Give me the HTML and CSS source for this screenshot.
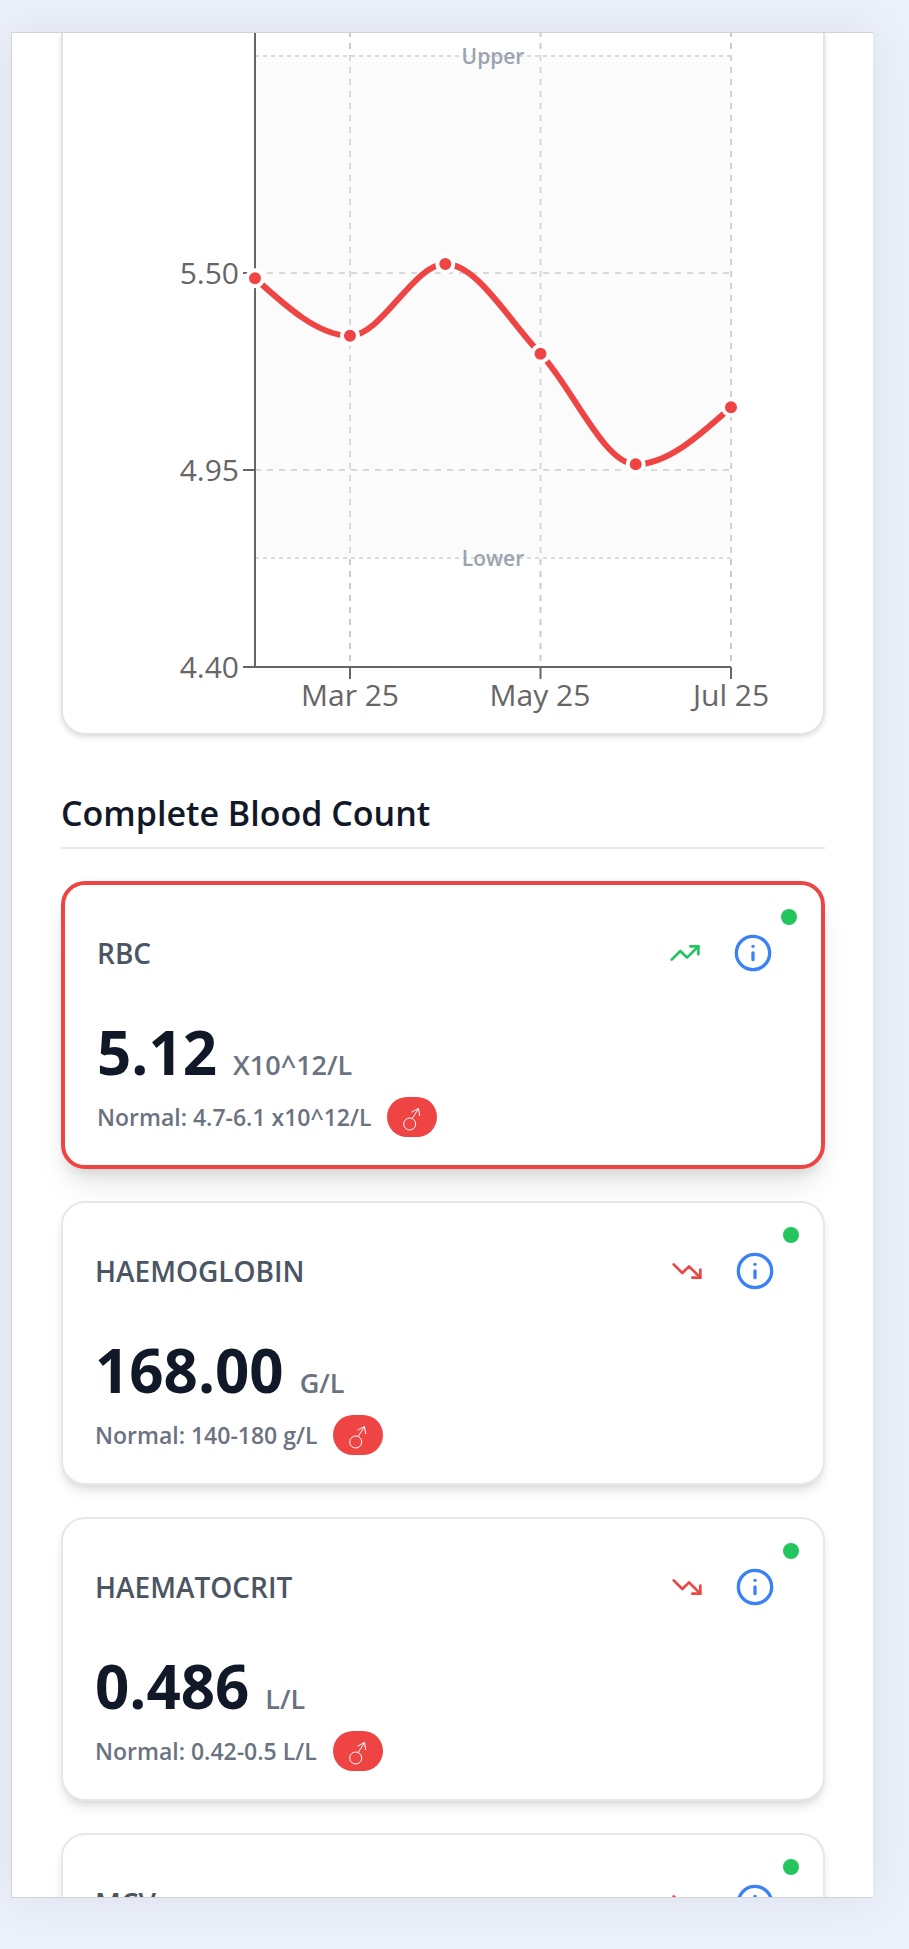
FILE: index.html
```
<!DOCTYPE html>
<html lang="en">
<head>
<meta charset="utf-8">
<meta name="viewport" content="width=device-width, initial-scale=1">
<title>Blood results</title>
<link rel="stylesheet" href="styles.css">
</head>
<body class="page">
<svg width="0" height="0" class="sprite" aria-hidden="true">
  <symbol id="info" viewBox="0 0 24 24"><circle cx="12" cy="12" r="10"/><path d="M12 16v-4"/><path d="M12 8h.01"/></symbol>
  <symbol id="up" viewBox="0 0 24 24"><polyline points="22 7 13.5 15.5 8.5 10.5 2 17"/><polyline points="16 7 22 7 22 13"/></symbol>
  <symbol id="down" viewBox="0 0 24 24"><polyline points="22 17 13.5 8.5 8.5 13.5 2 7"/><polyline points="16 17 22 17 22 11"/></symbol>
  <symbol id="male" viewBox="0 0 50 40"><circle cx="22.7" cy="27" r="6"/><path d="M25.3 21.4 31.5 11.5M24.5 15.2 31.5 11.5 32.7 19"/></symbol>
</svg>
<main class="panel">
  <section class="chart-card">
    <svg class="chart" viewBox="63 33 760 700" role="img" aria-label="RBC trend">
      <g class="grid">
        <path d="M255 273H731M255 470H731"/>
        <path d="M350 31V667M540.5 31V667M731 31V667"/>
      </g>
      <rect class="band" x="255" y="56" width="476" height="502"/>
      <path class="limit" d="M255 56H731M255 558H731"/>
      <path class="axis" d="M255 33V667M243 667H731M243 273H255M243 470H255M350 667V679M540.5 667V679M731 667V679"/>
      <g class="tick tick-y">
        <text x="239" y="284">5.50</text>
        <text x="239" y="481">4.95</text>
        <text x="239" y="678">4.40</text>
      </g>
      <g class="tick tick-x">
        <text x="350" y="706">Mar 25</text>
        <text x="540" y="706">May 25</text>
        <text x="731" y="706">Jul 25</text>
      </g>
      <g class="limit-label">
        <text x="493" y="64">Upper</text>
        <text x="493" y="566">Lower</text>
      </g>
      <path class="line" d="M255 278.3C286.7 307 318.3 335.7 350 335.7C381.8 335.7 413.5 264 445.3 264C477 264 508.7 320.3 540.5 353.7C572.2 387.1 604 464.3 635.7 464.3C667.4 464.3 699.3 435.8 731 407.3"/>
      <g class="point">
        <circle cx="255" cy="278.3" r="8"/><circle cx="350" cy="335.7" r="8"/><circle cx="445.3" cy="264" r="8"/>
        <circle cx="540.5" cy="353.7" r="8"/><circle cx="635.7" cy="464.3" r="8"/><circle cx="731" cy="407.3" r="8"/>
      </g>
    </svg>
  </section>

  <h2 class="heading">Complete Blood Count</h2>

  <div class="cards">
    <article class="card card-active">
      <span class="status"></span>
      <header class="card-head">
        <h3 class="name">RBC</h3>
        <svg class="trend trend-up"><use href="#up"/></svg>
        <button class="info" type="button" aria-label="About RBC"><svg class="info-icon"><use href="#info"/></svg></button>
      </header>
      <p class="reading"><span class="value">5.12</span><span class="unit">X10^12/L</span></p>
      <p class="normal">Normal: 4.7-6.1 x10^12/L<span class="sex"><svg class="sex-icon" role="img" aria-label="Male"><use href="#male"/></svg></span></p>
    </article>
    <article class="card">
      <span class="status"></span>
      <header class="card-head">
        <h3 class="name">HAEMOGLOBIN</h3>
        <svg class="trend trend-down"><use href="#down"/></svg>
        <button class="info" type="button" aria-label="About haemoglobin"><svg class="info-icon"><use href="#info"/></svg></button>
      </header>
      <p class="reading"><span class="value">168.00</span><span class="unit">G/L</span></p>
      <p class="normal">Normal: 140-180 g/L<span class="sex"><svg class="sex-icon" role="img" aria-label="Male"><use href="#male"/></svg></span></p>
    </article>
    <article class="card">
      <span class="status"></span>
      <header class="card-head">
        <h3 class="name">HAEMATOCRIT</h3>
        <svg class="trend trend-down"><use href="#down"/></svg>
        <button class="info" type="button" aria-label="About haematocrit"><svg class="info-icon"><use href="#info"/></svg></button>
      </header>
      <p class="reading"><span class="value">0.486</span><span class="unit">L/L</span></p>
      <p class="normal">Normal: 0.42-0.5 L/L<span class="sex"><svg class="sex-icon" role="img" aria-label="Male"><use href="#male"/></svg></span></p>
    </article>
    <article class="card">
      <span class="status"></span>
      <header class="card-head">
        <h3 class="name">MCV</h3>
        <svg class="trend trend-down"><use href="#down"/></svg>
        <button class="info" type="button" aria-label="About MCV"><svg class="info-icon"><use href="#info"/></svg></button>
      </header>
    </article>
  </div>
</main>
</body>
</html>
```
FILE: styles.css
```
* { box-sizing: border-box; }
.page {
  margin: 0;
  height: 100vh;
  padding: 32px 36px 51px 11px;
  display: flex;
  background: #ecf0fa;
  font-family: "Open Sans", "Noto Sans", sans-serif;
  color: #111827;
  overflow: hidden;
}
.sprite { position: absolute; }
.panel {
  flex: 1;
  min-width: 0;
  padding: 0 48px 0 49px;
  overflow: hidden;
  background: #fff;
  border: 1px solid #d1d3d6;
  border-right: 0;
  box-shadow: 0 0 50px rgba(0, 20, 20, 0.07);
}
.chart-card {
  border: 2px solid #e3e3e3;
  border-top: 0;
  border-radius: 0 0 24px 24px;
  box-shadow: 0 2px 6px rgba(0, 0, 0, 0.1), 0 2px 4px -2px rgba(0, 0, 0, 0.1);
}
.chart { display: block; width: 100%; }
.grid { stroke: #ccc; stroke-width: 2; stroke-dasharray: 6 6; fill: none; }
.band { fill: #f3f3f3; fill-opacity: 0.33; }
.limit { stroke: #d9dbdf; stroke-width: 2; stroke-dasharray: 4 4; }
.axis { stroke: #666; stroke-width: 2; fill: none; }
.tick { fill: #666; font-size: 30px; }
.tick-y { text-anchor: end; }
.tick-x, .limit-label { text-anchor: middle; }
.limit-label { fill: #9ca3af; font-size: 21px; font-weight: 600; }
.line { stroke: #ef4444; stroke-width: 6; fill: none; }
.point { fill: #ef4444; stroke: #fff; stroke-width: 4; }

.heading {
  margin: 56px 0 32px;
  padding-bottom: 12px;
  border-bottom: 2px solid #e5e7eb;
  font-size: 34px;
  line-height: 44px;
  font-weight: 600;
}
.cards { display: grid; gap: 32px; }
.card {
  position: relative;
  padding: 32px 32px 28px;
  background: #fff;
  border: 2px solid #e5e7eb;
  border-radius: 24px;
  box-shadow: 0 8px 12px -2px rgba(0, 0, 0, 0.1), 0 4px 8px -4px rgba(0, 0, 0, 0.1);
}
.card-active {
  border: 4px solid #ef4444;
  box-shadow: 0 20px 30px -6px rgba(0, 0, 0, 0.1), 0 8px 12px -4px rgba(0, 0, 0, 0.1);
}
.status {
  position: absolute;
  top: 24px;
  right: 24px;
  width: 16px;
  height: 16px;
  border-radius: 50%;
  background: #22c55e;
}
.card-head { display: flex; align-items: center; gap: 16px; margin-bottom: 33px; }
.name { flex: 1; margin: 0; font-size: 28px; line-height: 40px; font-weight: 600; color: #4b5563; }
.trend, .info-icon { fill: none; stroke: currentColor; stroke-width: 2; stroke-linecap: round; stroke-linejoin: round; }
.trend { width: 32px; height: 32px; }
.trend-up { color: #22c55e; }
.trend-down { color: #ef4444; }
.info { display: flex; padding: 16px; border: 0; background: none; color: #3b82f6; }
.info-icon { width: 40px; height: 40px; }
.reading { display: flex; align-items: baseline; gap: 16px; margin: 0 0 15px; line-height: 60px; }
.value { font-size: 60px; font-weight: 700; }
.unit { font-size: 27px; line-height: 24px; font-weight: 600; color: #6b7280; }
.normal { display: flex; align-items: center; gap: 16px; margin: 0; font-size: 23px; line-height: 40px; font-weight: 600; color: #6b7280; }
.sex { display: flex; border-radius: 20px; background: #ef4444; }
.sex-icon { width: 50px; height: 40px; fill: none; stroke: #fff; stroke-width: 1; }
```
